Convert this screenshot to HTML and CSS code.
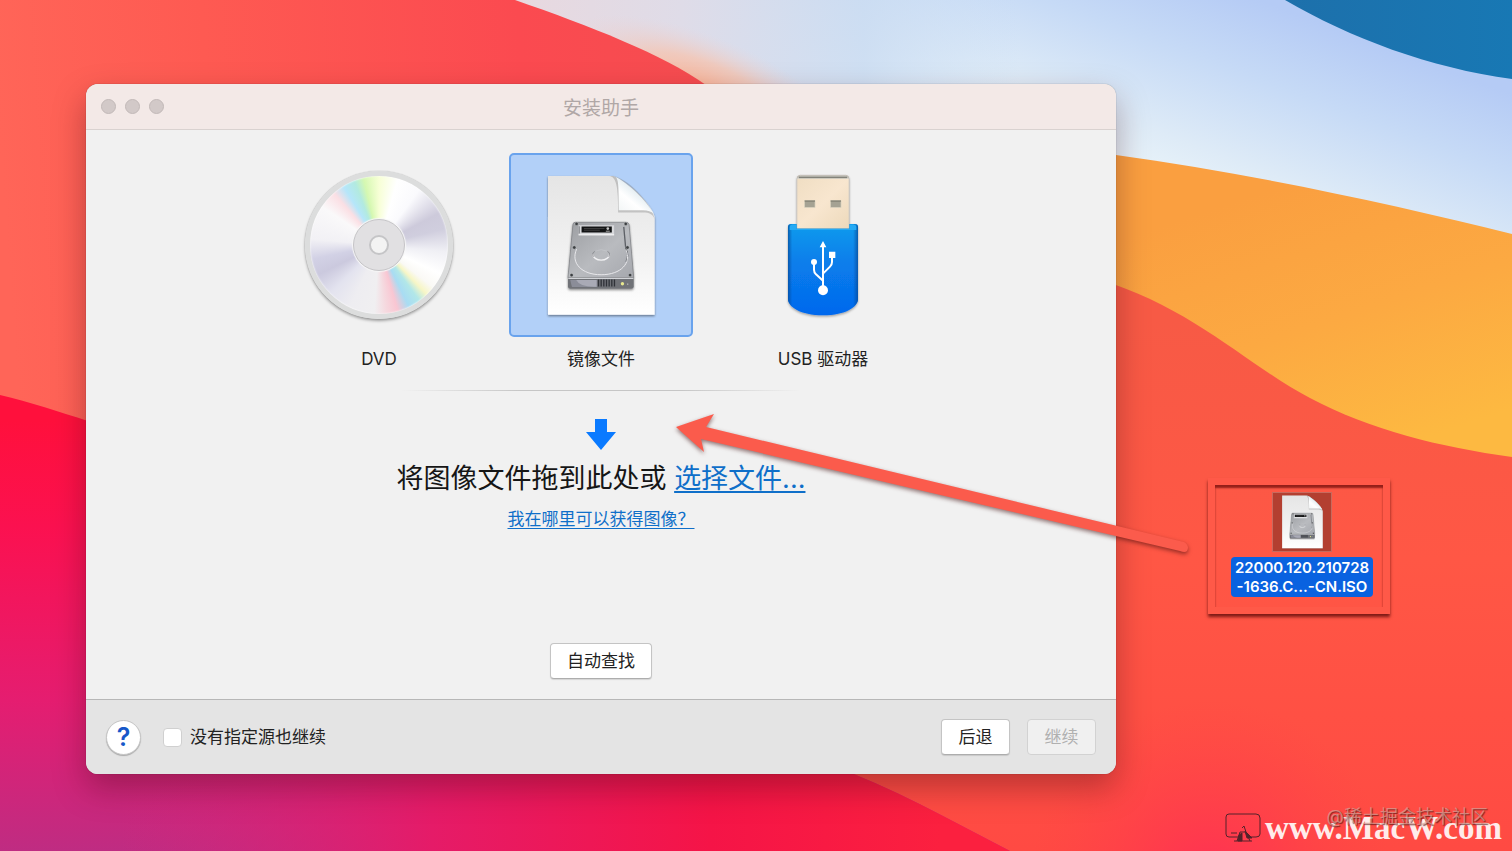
FILE: index.html
```html
<!DOCTYPE html>
<html lang="zh-CN">
<head>
<meta charset="utf-8">
<title>安装助手</title>
<meta name="viewport" content="width=device-width, initial-scale=1">
<link rel="stylesheet" href="styles.css">
</head>
<body>
<div class="desktop">
  <svg class="wallpaper" viewBox="0 0 1512 851" preserveAspectRatio="none" aria-hidden="true">
    <defs>
      <linearGradient id="sky" gradientUnits="userSpaceOnUse" x1="1260" y1="0" x2="1185" y2="200">
        <stop offset="0" stop-color="#b5cbf5"/><stop offset=".35" stop-color="#c6daf6"/><stop offset=".75" stop-color="#deebf7"/><stop offset="1" stop-color="#ebf5fa"/>
      </linearGradient>
      <linearGradient id="haze" gradientUnits="userSpaceOnUse" x1="500" y1="0" x2="1020" y2="0">
        <stop offset="0" stop-color="#e9d8de"/><stop offset=".35" stop-color="#dfdce8"/><stop offset=".7" stop-color="#c8daf1" stop-opacity=".8"/><stop offset="1" stop-color="#c5daf5" stop-opacity="0"/>
      </linearGradient>
      <radialGradient id="peach" gradientUnits="userSpaceOnUse" cx="0" cy="0" r="150" gradientTransform="translate(705 90) rotate(22) scale(1 .36)">
        <stop offset="0" stop-color="#fab193"/><stop offset=".5" stop-color="#f4c5b3" stop-opacity=".8"/><stop offset="1" stop-color="#ead5d8" stop-opacity="0"/>
      </radialGradient>
      <linearGradient id="ocean" x1="0" y1="0" x2="1" y2="0">
        <stop offset="0" stop-color="#1d70ab"/><stop offset="1" stop-color="#1878b4"/>
      </linearGradient>
      <linearGradient id="coral" gradientUnits="userSpaceOnUse" x1="0" y1="150" x2="700" y2="100">
        <stop offset="0" stop-color="#ff6558"/><stop offset=".3" stop-color="#fe5a52"/><stop offset=".75" stop-color="#fb4a50"/><stop offset="1" stop-color="#f54c50"/>
      </linearGradient>
      <linearGradient id="orange" gradientUnits="userSpaceOnUse" x1="1240" y1="200" x2="1330" y2="470">
        <stop offset="0" stop-color="#fa9f40"/><stop offset=".5" stop-color="#fca942"/><stop offset="1" stop-color="#fdb941"/>
      </linearGradient>
      <linearGradient id="red" gradientUnits="userSpaceOnUse" x1="1200" y1="320" x2="1200" y2="851">
        <stop offset="0" stop-color="#f75a45"/><stop offset=".45" stop-color="#ff5745"/><stop offset="1" stop-color="#ff4a43"/>
      </linearGradient>
      <linearGradient id="pink" gradientUnits="userSpaceOnUse" x1="100" y1="420" x2="100" y2="851">
        <stop offset="0" stop-color="#ff103c"/><stop offset=".25" stop-color="#fb1150"/><stop offset=".65" stop-color="#e51d70"/><stop offset="1" stop-color="#bf2c82"/>
      </linearGradient>
      <linearGradient id="crimson" gradientUnits="userSpaceOnUse" x1="120" y1="0" x2="940" y2="0">
        <stop offset="0" stop-color="#d8267b" stop-opacity="0"/><stop offset=".38" stop-color="#e51b68"/><stop offset=".72" stop-color="#f51447"/><stop offset="1" stop-color="#fb203f"/>
      </linearGradient>
      <radialGradient id="glow" gradientUnits="userSpaceOnUse" cx="1210" cy="880" r="180">
        <stop offset="0" stop-color="#ff245b" stop-opacity=".7"/><stop offset="1" stop-color="#ff3d47" stop-opacity="0"/>
      </radialGradient>
    </defs>
    <rect width="1512" height="851" fill="url(#sky)"/>
    <rect x="480" width="620" height="260" fill="url(#haze)"/>
    <rect x="480" width="620" height="260" fill="url(#peach)"/>
    <path d="M1285 0C1350 38 1430 68 1512 79V0Z" fill="url(#ocean)"/>
    <path d="M1000 148Q1060 150 1116 155C1260 175 1400 206 1512 234V500H1000Z" fill="url(#orange)"/>
    <path d="M900 280H1100C1190 306 1250 367 1310 398C1370 430 1440 447 1512 457V851H600V400Z" fill="url(#red)"/>
    <path d="M0 0H515C590 26 662 54 706 85L820 180V470H0Z" fill="url(#coral)"/>
    <path d="M0 395C30 402 60 412 88 421L400 600L830 765C890 786 950 820 1010 851H0Z" fill="url(#pink)"/>
    <path d="M120 600H760L830 765C890 786 950 820 1010 851H120Z" fill="url(#crimson)"/>
    <rect x="970" y="630" width="480" height="221" fill="url(#glow)"/>
  </svg>

  <main class="window">
    <header class="titlebar">
      <div class="lights"><span class="light"></span><span class="light"></span><span class="light"></span></div>
      <h1 class="title">安装助手</h1>
    </header>

    <section class="content">
      <div class="sources">
        <button class="source" type="button">
          <span class="tile"><span class="disc"><span class="hub"><span class="hole"></span></span></span></span>
          <span class="source-name">DVD</span>
        </button>
        <button class="source" type="button" aria-pressed="true">
          <span class="tile tile-selected">
            <svg class="doc" viewBox="135 80 340 440" aria-hidden="true">
              <defs>
                <linearGradient id="paper" x1="0" y1="0" x2="0" y2="1"><stop offset="0" stop-color="#e5e5e5"/><stop offset=".6" stop-color="#f2f2f2"/><stop offset="1" stop-color="#fff"/></linearGradient>
                <linearGradient id="fold" x1=".7" y1=".2" x2="0" y2="1"><stop offset="0" stop-color="#cfe0e7"/><stop offset=".5" stop-color="#fff"/><stop offset="1" stop-color="#eef2f3"/></linearGradient>
                <linearGradient id="metal" x1="0" y1="0" x2="1" y2="1"><stop offset="0" stop-color="#9c9ea2"/><stop offset=".55" stop-color="#b9bbbf"/><stop offset="1" stop-color="#a5a7ad"/></linearGradient>
                <filter id="soft" x="-20%" y="-20%" width="140%" height="140%"><feDropShadow dx="0" dy="4" stdDeviation="4" flood-opacity=".45"/></filter>
              </defs>
              <symbol id="image-file" viewBox="135 80 340 440">
                <path filter="url(#soft)" d="M144 91H340C385 108 455 175 465 214V508H144Z" fill="url(#paper)"/>
                <path d="M325 91C345 92 356 105 355 201H430C450 201 458 206 465 220C459 186 400 105 340 91Z" fill="#777" opacity=".35"/>
                <path d="M343 91C356 96 357 112 357 194H430C445 194 455 198 462 204C440 165 385 112 343 91Z" fill="url(#fold)"/>
                <g filter="url(#soft)">
                  <path d="M204 397H402V423Q402 430 395 430H211Q204 430 204 423Z" fill="#707277"/>
                  <path d="M226 230H379Q386 230 388 237L402 397H204L219 237Q220 230 226 230Z" fill="url(#metal)" stroke="#77797d" stroke-width="2"/>
                </g>
                <path d="M205 399H401" stroke="#dedfe3" stroke-width="3"/>
                <path d="M211 404H292V425H216Z" fill="#8b8d98"/><path d="M229 404H290V424Q240 426 229 404Z" fill="#a9aab5"/>
                <path d="M236 239H343V268H236Z" fill="#d8d9dc"/><path d="M245 243H336V261H245Z" fill="#131415"/><path d="M252 249H314M252 254H300" stroke="#555" stroke-width="2"/><circle cx="324" cy="249" r="4" fill="#c8c8c8"/><path d="M318 257H330" stroke="#aaa" stroke-width="3"/>
                <path d="M236 268H343" stroke="#fff" stroke-width="3"/><path d="M238 242V264" stroke="#77797d" stroke-width="3"/>
                <path d="M372 244L378 310Q389 328 379 349" fill="none" stroke="#5d6066" stroke-width="4"/>
                <path d="M230 311C212 352 244 388 304 388C364 388 397 352 378 312" fill="none" stroke="#e8e8eb" stroke-width="3"/>
                <path d="M279 326A25 18 0 0 0 329 326" fill="none" stroke="#f1f1f3" stroke-width="4"/><path d="M281 334Q275 322 285 318M327 334Q333 322 323 318" fill="none" stroke="#75777c" stroke-width="2"/>
                <path d="M287 317Q304 308 321 317" fill="none" stroke="#c6c7cb" stroke-width="2"/>
                <g fill="#3c3f42" stroke="#d2d3d6" stroke-width="1"><circle cx="230" cy="235" r="5"/><circle cx="378" cy="235" r="5"/><circle cx="223" cy="306" r="5"/><circle cx="383" cy="306" r="5"/><circle cx="215" cy="389" r="5"/><circle cx="391" cy="389" r="5"/></g>
                <path d="M296 402V423M304 402V423M312 402V423M320 402V423M328 402V423M336 402V423M344 402V423" stroke="#303238" stroke-width="4"/>
                <circle cx="368" cy="415" r="5" fill="#e9e98f"/><circle cx="384" cy="416" r="2" fill="#d6d6d6"/>
              </symbol>
              <use href="#image-file" x="135" y="80" width="340" height="440"/>
            </svg>
          </span>
          <span class="source-name">镜像文件</span>
        </button>
        <button class="source" type="button">
          <span class="tile">
            <svg class="usb" viewBox="75 30 234 444" aria-hidden="true">
              <defs>
                <linearGradient id="body" x1="0" y1="0" x2="0" y2="1"><stop offset="0" stop-color="#109bed"/><stop offset=".4" stop-color="#087feb"/><stop offset="1" stop-color="#0468ed"/></linearGradient>
                <linearGradient id="rim" x1="0" x2="1"><stop offset="0" stop-color="#064a98" stop-opacity=".75"/><stop offset=".06" stop-color="#064a98" stop-opacity="0"/><stop offset=".93" stop-color="#064a98" stop-opacity="0"/><stop offset="1" stop-color="#064a98" stop-opacity=".75"/></linearGradient>
                <linearGradient id="plug" x1="0" y1="0" x2="1" y2="1"><stop offset="0" stop-color="#f0dec3"/><stop offset=".5" stop-color="#f8e6cf"/><stop offset="1" stop-color="#edd9bb"/></linearGradient>
                <filter id="lift" x="-20%" y="-10%" width="140%" height="125%"><feDropShadow dx="0" dy="4" stdDeviation="3" flood-opacity=".35"/></filter>
              </defs>
              <g filter="url(#lift)">
                <path d="M87 198Q87 189 96 189H288Q297 189 297 198V414C297 437 261 463 192 463C123 463 87 437 87 414Z" fill="url(#body)"/>
                <path d="M114 202V53Q114 43 124 43H260Q270 43 270 53V202Z" fill="#d9d8d2" stroke="#b2aaa0" stroke-width="2"/>
              </g>
              <path d="M119 49H265" stroke="#83837a" stroke-width="5"/>
              <path d="M87 198Q87 189 96 189H288Q297 189 297 198V414C297 437 261 463 192 463C123 463 87 437 87 414Z" fill="url(#rim)"/>
              <path d="M115 53V202H269V53Z" fill="url(#plug)"/>
              <path d="M92 197Q92 191 100 191H112V203H272V191H284Q292 191 292 197V207H92Z" fill="#25aaf4"/>
              <g fill="#a5a293" stroke="#d6cfbd" stroke-width="2"><rect x="137" y="119" width="31" height="20"/><rect x="215" y="119" width="31" height="20"/></g><path d="M137 120H168M215 120H246" stroke="#747266" stroke-width="3"/>
              <g fill="none" stroke="#fff" stroke-width="6"><path d="M192 386V252M165 304V326Q165 334 171 340L192 359M219 282V303Q219 311 213 317L192 338"/></g>
              <path d="M192 240L202 259H182ZM210 272H229V291H210Z" fill="#fff"/><circle cx="165" cy="303" r="9" fill="#fff"/><circle cx="192" cy="388" r="15" fill="#fff"/>
            </svg>
          </span>
          <span class="source-name">USB 驱动器</span>
        </button>
      </div>
      <div class="divider"></div>
      <svg class="down" viewBox="0 0 30 31" aria-hidden="true"><path d="M9 0H21V13H30L15 31L0 13H9Z" fill="#0a7aff"/></svg>
      <p class="drop">将图像文件拖到此处或 <a href="#choose">选择文件...</a></p>
      <a class="where" href="#where">我在哪里可以获得图像？</a>
      <button class="btn btn-wide" type="button">自动查找</button>
    </section>

    <footer class="footer">
      <button class="help" type="button" aria-label="帮助">?</button>
      <label class="check"><input type="checkbox">没有指定源也继续</label>
      <div class="actions">
        <button class="btn" type="button">后退</button>
        <button class="btn" type="button" disabled>继续</button>
      </div>
    </footer>
  </main>

  <figure class="file">
    <span class="file-icon"><svg class="file-doc" viewBox="135 80 340 440" aria-hidden="true"><use href="#image-file" x="135" y="80" width="340" height="440"/></svg></span>
    <figcaption class="file-name">22000.120.210728<br>-1636.C...-CN.ISO</figcaption>
  </figure>

  <svg class="pointer" viewBox="670 405 530 160" aria-hidden="true">
    <path d="M676 427L714 414L706 427L1184 542Q1190 546 1187 551Q1185 553 1180 551L701 439L704 452Z" fill="#fb5b4c"/>
  </svg>

  <div class="site-mark">
    <svg class="site-icon" viewBox="0 0 36 30" aria-hidden="true" fill="none" stroke="#54232a" stroke-width="1">
      <path d="M13 24H4Q1 24 1 21V4Q1 1 4 1H31Q35 1 35 5V21Q35 24 31 24H24M9 28H27M12 28L15 19H21L25 28M17 15L19 13L21 19M6 20H12"/>
      <path d="M14 22L17 20V28H13ZM20 18L27 25H22Z" fill="#54232a"/>
    </svg>
    <span class="site-name">www.MacW.com</span>
  </div>
  <span class="credit">@稀土掘金技术社区</span>
</div>
</body>
</html>
```

FILE: styles.css
```css
* { box-sizing: border-box; }

body {
  margin: 0;
  font-family: Inter, "Noto Sans CJK SC", sans-serif;
  font-size: 17px;
  line-height: 24px;
  color: #222;
}

button { font: inherit; color: inherit; }

.desktop {
  position: relative;
  min-height: 100vh;
  padding: 84px 396px 76px 86px;
  overflow: hidden;
  background: #ff5745;
}

.wallpaper {
  position: absolute;
  inset: 0;
  width: 100%;
  height: 100%;
}

.window {
  position: relative;
  min-width: 720px;
  border-radius: 12px;
  overflow: hidden;
  background: #f1f1f1;
  box-shadow: 0 0 1px rgba(0, 0, 0, .5), 0 14px 32px rgba(60, 10, 20, .35);
}

.titlebar {
  display: grid;
  grid-template-columns: 1fr auto 1fr;
  align-items: center;
  height: 46px;
  padding: 0 15px;
  background: #f3e9e7;
  border-bottom: 1px solid #d9d2d0;
}

.lights { display: flex; gap: 9px; }

.light {
  width: 15px;
  height: 15px;
  border-radius: 50%;
  background: #d2c9c8;
  border: 1px solid #c2b9b8;
}

.title {
  margin: 0;
  padding-top: 4px;
  font-size: 19px;
  font-weight: 400;
  color: #b0a7a6;
}

.content {
  display: flex;
  flex-direction: column;
  align-items: center;
  padding: 23px 20px 20px;
}

.sources { display: flex; gap: 38px; }

.source {
  display: flex;
  flex-direction: column;
  align-items: center;
  gap: 10px;
  padding: 0;
  border: 0;
  background: none;
}

.tile {
  display: flex;
  align-items: center;
  justify-content: center;
  width: 184px;
  height: 184px;
  border: 2px solid transparent;
  border-radius: 5px;
}

.tile-selected { background: #b2d0f8; border-color: #69a3ed; }

.doc { width: 113px; height: 147px; }
.usb { width: 78px; height: 148px; }

.disc {
  display: flex;
  align-items: center;
  justify-content: center;
  width: 148px;
  height: 148px;
  border: 5px solid #dcdddd;
  border-radius: 50%;
  background: conic-gradient(#f7ffd6 0deg, #fff 16deg, #fafafd 36deg, #cdcadb 62deg, #d0cede 76deg, #f0f0f5 96deg, #fff 115deg, #faf9f5 128deg, #f7f6c6 136deg, #b2e7e8 144deg, #a8dcf3 154deg, #f9c6d2 164deg, #f5d9df 174deg, #f0eff1 184deg, #eeedf1 205deg, #e3e3ef 225deg, #cbc9de 244deg, #d2d1e5 258deg, #f2f1f5 275deg, #faf9fa 304deg, #fbdfe4 319deg, #b5e6fa 329deg, #b2eae0 339deg, #d5f8b1 347deg, #f7ffd6 360deg);
  background-clip: padding-box;
  box-shadow: 0 2px 3px rgba(0, 0, 0, .35), 0 0 1px #999, inset 0 0 2px #fff;
}

.hub {
  display: flex;
  align-items: center;
  justify-content: center;
  width: 52px;
  height: 52px;
  border: 1px solid #c5c4c7;
  border-radius: 50%;
  background: #e1e0e2;
  box-shadow: 0 0 1px 1px #f7f7f7;
}

.hole {
  width: 20px;
  height: 20px;
  border: 2px solid #c5c5c7;
  border-radius: 50%;
  background: #f3f3f3;
}

.divider {
  width: 400px;
  height: 1px;
  margin-top: 19px;
  background: linear-gradient(90deg, transparent, #c6c6c6 30%, #c6c6c6 70%, transparent);
}

.down { width: 30px; height: 31px; margin-top: 28px; }

.drop {
  margin: 9px 0 0;
  font-size: 27px;
  line-height: 40px;
  color: #161616;
}

a {
  color: #0f6fc9;
  text-decoration: underline;
  text-decoration-thickness: 1px;
  text-underline-offset: 3px;
}

.drop a { text-decoration-thickness: 2px; }

.where { margin-top: 8px; }

.btn {
  min-width: 69px;
  height: 36px;
  padding: 0 16px;
  border: 1px solid #c4c4c4;
  border-bottom-color: #adadad;
  border-radius: 4px;
  background: #fff;
  box-shadow: 0 1px 1px rgba(0, 0, 0, .12);
}

.btn:disabled {
  color: #b0b0b0;
  background: #f0f0f0;
  border-color: #d2d2d2;
  box-shadow: none;
}

.btn-wide { margin-top: 112px; }

.footer {
  display: flex;
  align-items: center;
  height: 75px;
  padding: 0 20px;
  background: #e4e4e4;
  border-top: 1px solid #b7b7b7;
}

.help {
  width: 35px;
  height: 35px;
  padding: 0;
  border: 1px solid #c6c6c6;
  border-radius: 50%;
  background: #fff;
  box-shadow: 0 1px 1px rgba(0, 0, 0, .25);
  font-size: 25px;
  font-weight: 600;
  color: #1758c9;
}

.check {
  display: flex;
  align-items: center;
  gap: 8px;
  margin-left: 22px;
}

.check input {
  appearance: none;
  width: 19px;
  height: 19px;
  margin: 0;
  border: 1px solid #d0d0d0;
  border-radius: 4px;
  background: #fff;
}

.check input:checked { background: #0a7aff; }

.actions { display: flex; gap: 17px; margin-left: auto; }

.file {
  position: absolute;
  top: 478px;
  right: 122px;
  display: flex;
  flex-direction: column;
  align-items: center;
  gap: 5px;
  width: 182px;
  height: 136px;
  margin: 0;
  padding: 7px 0 0 6px;
  border: 7px solid #ff5948;
  box-shadow: 0 3px 3px rgba(70, 0, 0, .7), inset 0 3px 2px rgba(90, 0, 0, .65);
}

.file-icon {
  display: flex;
  align-items: center;
  justify-content: center;
  width: 60px;
  height: 60px;
  border: 1px solid #c86a5e;
  background: #b33f30;
}

.file-doc { width: 43px; height: 56px; }

.file-name {
  padding: 1px 4px;
  border-radius: 4px;
  background: #0962e0;
  color: #fff;
  font-size: 15px;
  font-weight: 600;
  line-height: 19px;
  text-align: center;
  white-space: nowrap;
}

.pointer {
  position: absolute;
  top: 405px;
  left: 670px;
  width: 530px;
  height: 160px;
  pointer-events: none;
  filter: drop-shadow(0 2px 2px rgba(60, 10, 10, .55));
}

.site-mark {
  position: absolute;
  right: 10px;
  bottom: 3px;
  display: flex;
  align-items: center;
  gap: 4px;
}

.site-icon { width: 36px; height: 30px; }

.site-name {
  font-family: "Liberation Serif", serif;
  font-size: 33px;
  font-weight: 700;
  line-height: 40px;
  color: #ffeceb;
}

.credit {
  position: absolute;
  right: 24px;
  bottom: 22px;
  font-size: 18px;
  color: rgba(215, 165, 155, .7);
  text-shadow: 1px 1px 1px rgba(80, 20, 20, .7);
}
```
